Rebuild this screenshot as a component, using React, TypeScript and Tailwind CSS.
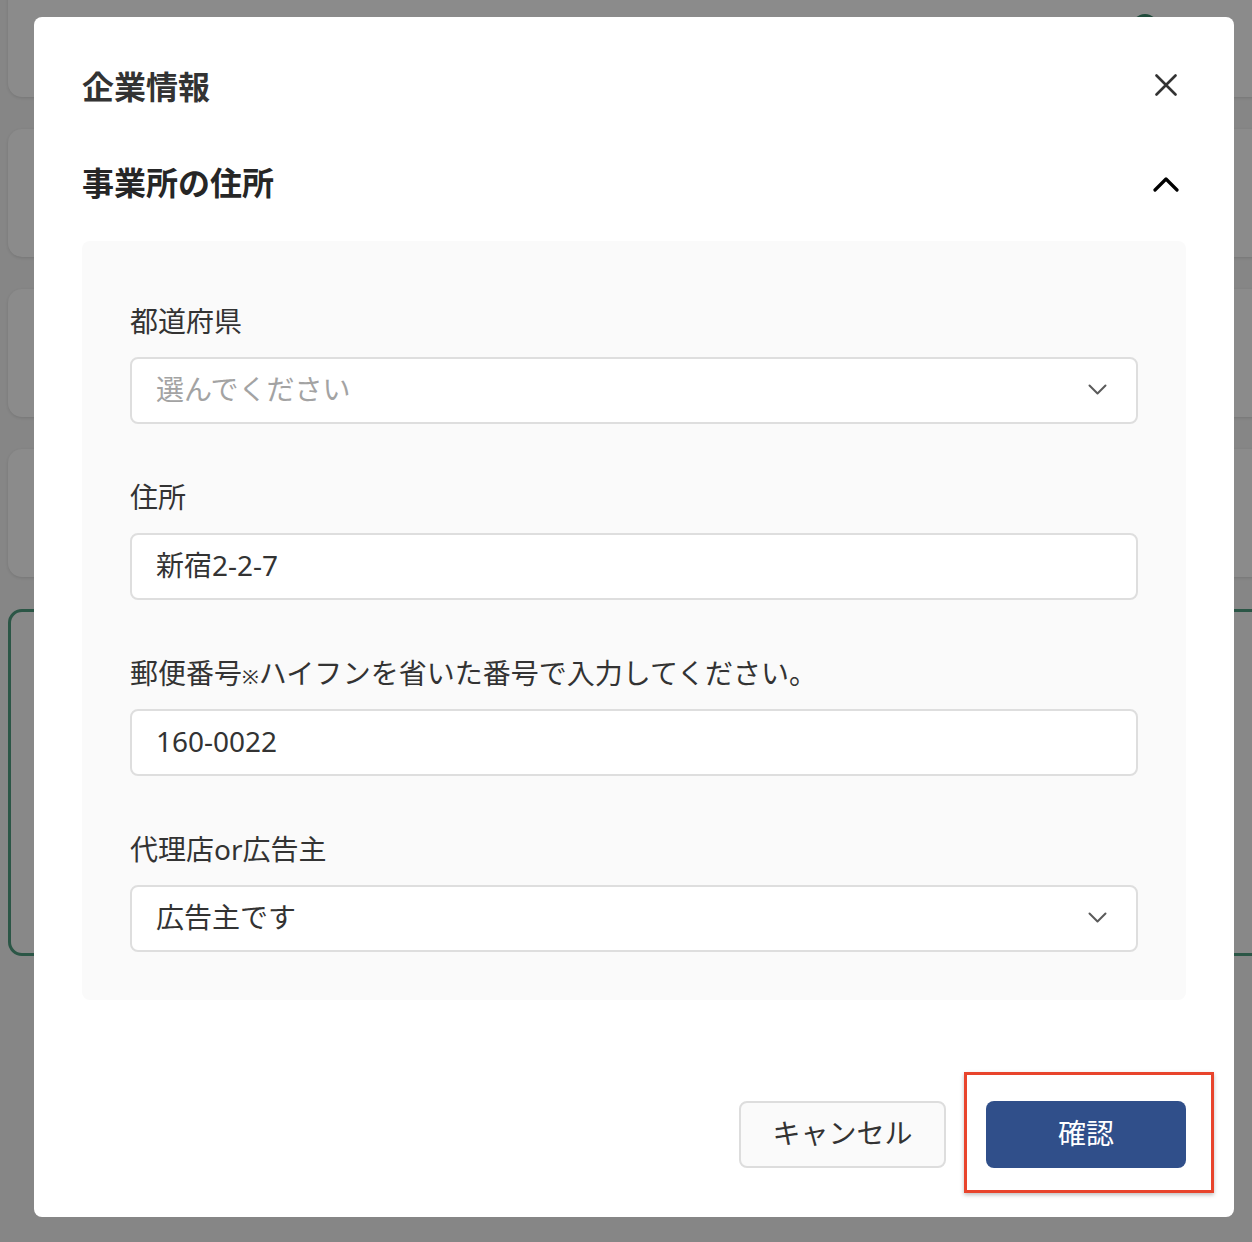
import React from "react";

type Field = { label: React.ReactNode; key: string; value: string; select: boolean; placeholder: boolean };

const fields: Field[] = [
  { key: "pref", label: "都道府県", value: "選んでください", select: true, placeholder: true },
  { key: "addr", label: "住所", value: "新宿2-2-7", select: false, placeholder: false },
  {
    key: "zip",
    label: (
      <>
        郵便番号<span className="text-[20px] leading-[0]">※</span>ハイフンを省いた番号で入力してください。
      </>
    ),
    value: "160-0022",
    select: false,
    placeholder: false,
  },
  { key: "type", label: "代理店or広告主", value: "広告主です", select: true, placeholder: false },
];

function ChevronDown() {
  return (
    <svg width="19" height="11" viewBox="0 0 19 11" fill="none">
      <path d="M1.5 1.5 L9.5 9.5 L17.5 1.5" stroke="#5a5a5a" strokeWidth="2" strokeLinecap="round" strokeLinejoin="round" />
    </svg>
  );
}

export default function App() {
  return (
    <div
      className="relative h-[1242px] w-[1252px] overflow-hidden bg-[#868686]"
      style={{ fontFamily: '"Noto Sans", "Noto Sans CJK JP", sans-serif' }}
    >
      {/* background page */}
      <div className="flex flex-col gap-[32px] pl-[8px]">
        <div className="mt-[-31px] h-[128px] w-[1260px] shrink-0 rounded-[14px] bg-[#8b8b8b] pl-[1124px] pt-[45px] shadow-[0_1px_3px_rgba(0,0,0,0.12)]">
          <div className="h-[26px] w-[26px] rounded-full bg-[#1f4a3a]" />
        </div>
        <div className="h-[128px] w-[1260px] shrink-0 rounded-[14px] bg-[#8b8b8b] shadow-[0_1px_3px_rgba(0,0,0,0.12)]" />
        <div className="h-[128px] w-[1260px] shrink-0 rounded-[14px] bg-[#8b8b8b] shadow-[0_1px_3px_rgba(0,0,0,0.12)]" />
        <div className="h-[128px] w-[1260px] shrink-0 rounded-[14px] bg-[#8b8b8b] shadow-[0_1px_3px_rgba(0,0,0,0.12)]" />
        <div className="h-[347px] w-[1260px] shrink-0 rounded-[14px] border-[3px] border-[#2b5646] bg-[#888888]" />
      </div>

      {/* overlay with modal */}
      <div className="absolute inset-0 pl-[34px] pt-[17px]">
        <div className="flex h-[1200px] w-[1200px] flex-col rounded-[8px] bg-white px-[48px] pb-[49px] pt-[50px]">
          <div className="flex items-start justify-between">
            <h1 className="text-[32px] font-bold leading-[40px] text-[#333333]">企業情報</h1>
            <button className="mt-[-2px] flex h-[40px] w-[40px] items-center justify-center">
              <svg width="22" height="22" viewBox="0 0 22 22" fill="none">
                <path d="M1.5 1.5 L20.5 20.5 M20.5 1.5 L1.5 20.5" stroke="#333333" strokeWidth="2.6" strokeLinecap="round" />
              </svg>
            </button>
          </div>

          <div className="mt-[56px] flex h-[40px] items-center justify-between">
            <h2 className="text-[32px] font-bold leading-[40px] text-[#262626]">事業所の住所</h2>
            <button className="mt-[2px] flex h-[40px] w-[40px] items-center justify-center">
              <svg width="26" height="15" viewBox="0 0 26 15" fill="none">
                <path d="M2 13 L13 2 L24 13" stroke="#000000" strokeWidth="3.2" strokeLinecap="round" strokeLinejoin="round" />
              </svg>
            </button>
          </div>

          <div className="mt-[38px] flex flex-col gap-[56px] rounded-[8px] bg-[#fafafa] px-[48px] pb-[48px] pt-[63px]">
            {fields.map((f) => (
              <div key={f.key} className="flex flex-col">
                <label className="h-[36px] pb-[2px] text-[28px] leading-[34px] text-[#333333]">{f.label}</label>
                <div className="mt-[17px] flex h-[67px] items-center justify-between rounded-[8px] border-2 border-[#dedede] bg-white pb-[3px] pl-[24px] pr-[29px]">
                  <span
                    className={
                      f.placeholder
                        ? "text-[28px] leading-[36px] text-[#a3a3a3]"
                        : "text-[28px] leading-[36px] text-[#333333]"
                    }
                  >
                    {f.value}
                  </span>
                  {f.select ? <ChevronDown /> : null}
                </div>
              </div>
            ))}
          </div>

          <div className="mt-[101px] flex justify-end gap-[40px]">
            <button className="flex h-[67px] w-[207px] items-center justify-center rounded-[8px] border-2 border-[#dddddd] bg-[#fafafa] pb-[3px] text-[28px] text-[#333333]">
              キャンセル
            </button>
            <button className="flex h-[67px] w-[200px] items-center justify-center rounded-[8px] bg-[#304f8a] pb-[3px] text-[28px] text-white">
              確認
            </button>
          </div>
        </div>
      </div>

      {/* annotation highlight */}
      <div className="absolute left-[964px] top-[1072px] h-[121px] w-[250px] border-[3px] border-[#e8442c] shadow-[0_2px_4px_rgba(0,0,0,0.25)]" />
    </div>
  );
}
